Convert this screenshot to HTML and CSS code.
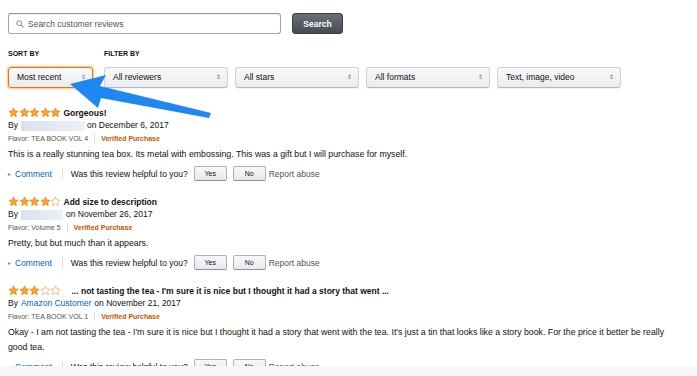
FILE: index.html
```html
<!DOCTYPE html>
<html lang="en">
<head>
  <meta charset="UTF-8">
  <title>Customer reviews</title>
  <link rel="stylesheet" href="styles.css">
</head>
<body>
  <div class="page">
    <div class="search-row">
      <div class="search-box">
        <svg class="search-icon" width="8" height="8" viewBox="0 0 10 10"><circle cx="4" cy="4" r="3" fill="none" stroke="#888" stroke-width="1.2"/><line x1="6.2" y1="6.2" x2="9.2" y2="9.2" stroke="#888" stroke-width="1.3"/></svg>
        <span>Search customer reviews</span>
      </div>
      <button class="search-btn">Search</button>
    </div>

    <div class="filters">
      <div class="sort">
        <div class="label">SORT BY</div>
        <div class="select focused">Most recent <span class="caret">&#8661;</span></div>
      </div>
      <div class="filter">
        <div class="label">FILTER BY</div>
        <div class="selects">
          <div class="select wide">All reviewers <span class="caret">&#8661;</span></div>
          <div class="select wide">All stars <span class="caret">&#8661;</span></div>
          <div class="select wide">All formats <span class="caret">&#8661;</span></div>
          <div class="select wide">Text, image, video <span class="caret">&#8661;</span></div>
        </div>
      </div>
    </div>

    <div class="review">
      <div class="title-row">
        <span class="stars" data-n="5"></span>
        <span class="title">Gorgeous!</span>
      </div>
      <div class="by">By <span class="blur" style="width:63px"></span> on December 6, 2017</div>
      <div class="meta">Flavor: TEA BOOK VOL 4 <span class="sep"></span> <span class="verified">Verified Purchase</span></div>
      <p class="body">This is a really stunning tea box. Its metal with embossing. This was a gift but I will purchase for myself.</p>
      <div class="actions">
        <span class="tri">&#9656;</span> <a href="#" class="comment">Comment</a>
        <span class="sep tall"></span>
        <span class="helpful">Was this review helpful to you?</span>
        <button class="small-btn">Yes</button>
        <button class="small-btn">No</button>
        <span class="report">Report abuse</span>
      </div>
    </div>

    <div class="review">
      <div class="title-row">
        <span class="stars" data-n="4"></span>
        <span class="title">Add size to description</span>
      </div>
      <div class="by">By <span class="blur" style="width:42px"></span> on November 26, 2017</div>
      <div class="meta">Flavor: Volume 5 <span class="sep"></span> <span class="verified">Verified Purchase</span></div>
      <p class="body">Pretty, but but much than it appears.</p>
      <div class="actions">
        <span class="tri">&#9656;</span> <a href="#" class="comment">Comment</a>
        <span class="sep tall"></span>
        <span class="helpful">Was this review helpful to you?</span>
        <button class="small-btn">Yes</button>
        <button class="small-btn">No</button>
        <span class="report">Report abuse</span>
      </div>
    </div>

    <div class="review">
      <div class="title-row">
        <span class="stars" data-n="3"></span>
        <span class="title cut">... not tasting the tea - I'm sure it is nice but I thought it had a story that went ...</span>
      </div>
      <div class="by">By <a href="#" class="author">Amazon Customer</a> on November 21, 2017</div>
      <div class="meta">Flavor: TEA BOOK VOL 1 <span class="sep"></span> <span class="verified">Verified Purchase</span></div>
      <p class="body">Okay - I am not tasting the tea - I'm sure it is nice but I thought it had a story that went with the tea. It's just a tin that looks like a story book. For the price it better be really good tea.</p>
      <div class="actions">
        <span class="tri">&#9656;</span> <a href="#" class="comment">Comment</a>
        <span class="sep tall"></span>
        <span class="helpful">Was this review helpful to you?</span>
        <button class="small-btn">Yes</button>
        <button class="small-btn">No</button>
        <span class="report">Report abuse</span>
      </div>
    </div>
  </div>
  <div class="bottom-band"></div>

  <!-- annotation arrow pointing at the sort dropdown -->
  <svg class="arrow" width="697" height="376" viewBox="0 0 697 376">
    <polygon points="70,84 106,75 100,86 211,113 209,118 101,98 98,108" fill="#1f87f2"/>
  </svg>

  <script>
    var starPath = '12,2 15.1,8.6 22,9.3 16.8,14 18.2,21 12,17.3 5.8,21 7.2,14 2,9.3 8.9,8.6';
    document.querySelectorAll('.stars').forEach(function (el) {
      var n = parseInt(el.getAttribute('data-n'));
      var html = '';
      for (var i = 0; i < 5; i++) {
        var full = i < n;
        html += '<svg width="11" height="11" viewBox="0 0 24 24"><polygon points="' + starPath + '" fill="' +
          (full ? '#ffa41c' : '#fff') + '" stroke="' + (full ? '#de7921' : '#d8a25a') + '" stroke-width="1.4" stroke-linejoin="round"/></svg>';
      }
      el.innerHTML = html;
    });
  </script>
</body>
</html>
```

FILE: styles.css
```css
/* General */
body {
  font-family: 'Liberation Sans', Arial, sans-serif;
  margin: 0;
  padding: 0;
  background-color: #fff;
  color: #111;
  font-size: 8.5px;
}
.page {
  height: 366px;
  overflow: hidden;
  padding: 13px 0 0 8px;
  box-sizing: border-box;
}

/* Search */
.search-row {
  display: flex;
  align-items: center;
  gap: 11px;
  height: 21px;
}
.search-box {
  width: 273px;
  height: 21px;
  box-sizing: border-box;
  border: 1px solid #a6a6a6;
  border-top-color: #949494;
  border-radius: 3px;
  box-shadow: inset 0 1px 0 rgba(0,0,0,0.06);
  display: flex;
  align-items: center;
  padding-left: 7px;
  gap: 4px;
  color: #555;
  font-size: 8.5px;
}
.search-btn {
  width: 51px;
  height: 21px;
  border: 1px solid #3b3e43;
  border-radius: 3px;
  background: linear-gradient(#6a6f77, #474b52);
  color: #fff;
  font-family: inherit;
  font-weight: bold;
  font-size: 8.5px;
  padding: 0;
}

/* Filters */
.filters {
  display: flex;
  gap: 11px;
  margin-top: 15px;
}
.label {
  font-size: 7px;
  font-weight: bold;
  line-height: 9px;
  color: #111;
  margin-bottom: 9px;
}
.selects {
  display: flex;
  gap: 7px;
}
.select {
  position: relative;
  width: 85px;
  height: 21px;
  box-sizing: border-box;
  border: 1px solid #d0d2d6;
  border-bottom-color: #b5b8bd;
  border-radius: 3px;
  background: linear-gradient(#f8f9fa, #eaebee);
  box-shadow: 0 1px 0 rgba(0,0,0,0.05);
  line-height: 19px;
  padding-left: 8px;
  font-size: 8.5px;
}
.select.wide {
  width: 124px;
}
.select.focused {
  border-color: #e77600;
  box-shadow: 0 0 2px 1px rgba(228,121,17,0.45);
}
.caret {
  position: absolute;
  right: 6px;
  top: 0;
  color: #777;
  font-size: 6px;
}

/* Reviews */
.review {
  margin-top: 18px;
}
.review + .review {
  margin-top: 14px;
}
.title-row {
  display: flex;
  align-items: center;
  height: 13px;
}
.stars {
  display: flex;
  margin-right: 3px;
  margin-top: -1px;
}
.stars svg {
  margin-right: -0.5px;
}
.title {
  font-weight: bold;
  font-size: 8.5px;
}
.title.cut {
  margin-left: 8px;
}
.by {
  line-height: 13px;
  display: flex;
  align-items: center;
  gap: 3px;
}
.blur {
  display: inline-block;
  height: 10px;
  background: linear-gradient(90deg, #d8e1f0, #e5eaf3 60%, #eef1f6);
}
.author {
  color: #0066c0;
  text-decoration: none;
}
.meta {
  line-height: 13px;
  font-size: 7px;
  color: #555;
  display: flex;
  align-items: center;
  gap: 4px;
}
.sep {
  display: inline-block;
  width: 1px;
  height: 9px;
  background-color: #ddd;
  margin: 0 2px;
}
.sep.tall {
  height: 11px;
  margin: 0 8px 0 10px;
}
.verified {
  color: #c45500;
  font-weight: bold;
}
.body {
  margin: 2px 0 0;
  font-size: 8.75px;
  line-height: 15px;
  max-width: 676px;
}
.actions {
  display: flex;
  align-items: center;
  height: 15px;
  margin-top: 4px;
}
.tri {
  color: #888;
  font-size: 6px;
  margin-right: 4px;
}
.comment {
  color: #0066c0;
  text-decoration: none;
}
.helpful {
  margin-right: 6px;
}
.small-btn {
  width: 33px;
  height: 15px;
  padding: 0;
  margin-right: 6px;
  border: 1px solid #adb1b8;
  border-bottom-color: #8d9096;
  border-radius: 2px;
  background: linear-gradient(#f7f8fa, #e7e9ec);
  font-family: inherit;
  font-size: 7px;
  color: #111;
}
.small-btn + .small-btn {
  margin-right: 3px;
}
.report {
  color: #555;
}

.bottom-band {
  height: 10px;
  background-color: #f7f7f7;
}
.arrow {
  position: absolute;
  left: 0;
  top: 0;
  pointer-events: none;
}
```
